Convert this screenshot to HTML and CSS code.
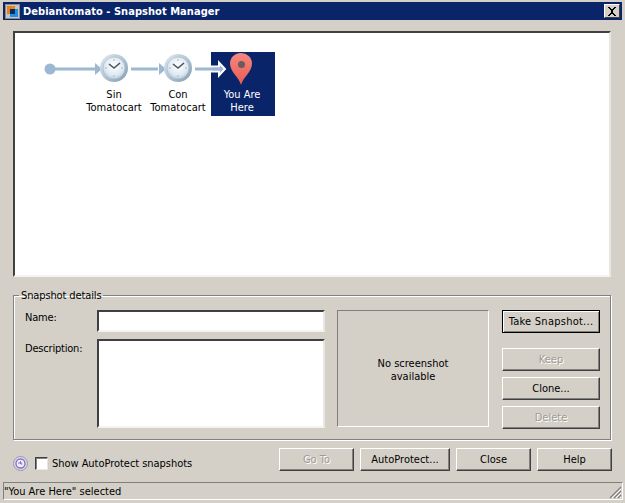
FILE: index.html
```html
<!DOCTYPE html>
<html lang="en">
<head>
<meta charset="utf-8">
<title>Debiantomato - Snapshot Manager</title>
<link rel="stylesheet" href="styles.css">
</head>
<body>
<div class="window">
  <header class="titlebar">
    <svg class="app-icon" width="15" height="15" viewBox="0 0 15 15">
      <rect x="0.5" y="0.5" width="14" height="14" fill="#c9c5bc" stroke="#8a8a8a"/>
      <rect x="2" y="2" width="8" height="8" fill="#e8821e"/>
      <rect x="5" y="5" width="8" height="8" fill="#1f8fe0"/>
      <rect x="5" y="5" width="5" height="5" fill="#0b2a63"/>
    </svg>
    <span class="title-text">Debiantomato - Snapshot Manager</span>
    <button class="close-x" type="button" aria-label="Close">
      <svg width="10" height="9" viewBox="0 0 10 9"><path d="M1 0h2v1h1v1h2V1h1V0h2v1H8v1H7v1H6v3h1v1h1v1h1v1H7V8H6V7H4v1H3v1H1V8h1V7h1V6h1V3H3V2H2V1H1z" fill="#000"/></svg>
    </button>
  </header>

  <main class="content">
    <section class="tree">
      <svg class="tree-art" width="594" height="242" viewBox="0 0 594 242">
        <defs>
          <radialGradient id="face" cx="50%" cy="40%" r="60%">
            <stop offset="0" stop-color="#ffffff"/>
            <stop offset="0.7" stop-color="#dfeaf2"/>
            <stop offset="1" stop-color="#b9d0e0"/>
          </radialGradient>
          <linearGradient id="rim" x1="0" y1="0" x2="1" y2="1">
            <stop offset="0" stop-color="#e6edf2"/>
            <stop offset="1" stop-color="#7f9ab3"/>
          </linearGradient>
          <linearGradient id="pin" x1="0" y1="0" x2="0" y2="1">
            <stop offset="0" stop-color="#f58880"/>
            <stop offset="1" stop-color="#ea5a52"/>
          </linearGradient>
          <g id="clock">
            <circle r="14" fill="url(#rim)"/>
            <circle r="11" fill="url(#face)" stroke="#a9bccb" stroke-width="0.7"/>
            <path d="M0-9v2M0 9V7M-9 0h2M9 0H7" stroke="#a8bac8" stroke-width="1"/>
            <path d="M-5-4L0 0L6-5" fill="none" stroke="#4a5560" stroke-width="1.6"/>
          </g>
        </defs>
        <rect x="196" y="19" width="64" height="64" fill="#0a246a"/>
        <circle cx="35" cy="36" r="5.5" fill="#9db8d2"/>
        <path d="M40 36h42" stroke="#9db8d2" stroke-width="3"/>
        <path d="M80 30l7 6l-7 6z" fill="#9db8d2"/>
        <use href="#clock" x="99" y="35"/>
        <path d="M116 36h27" stroke="#9db8d2" stroke-width="3"/>
        <path d="M144 30l7 6l-7 6z" fill="#9db8d2"/>
        <use href="#clock" x="163" y="35"/>
        <path d="M196 33.5h8v-4l6 6.500l-6 6.500v-4h-8z" fill="#9db8d2" stroke="#ffffff" stroke-width="2"/>
        <path d="M180 36h26" stroke="#9db8d2" stroke-width="3"/>
        <path d="M226 52c-2-8-11-13-11-21.500a11 10.500 0 0 1 22 0c0 8.500-9 13.500-11 21.500z" fill="url(#pin)"/>
        <circle cx="226.500" cy="31.500" r="3.500" fill="#6d5a5a"/>
      </svg>
      <div class="node node-a">Sin<br>Tomatocart</div>
      <div class="node node-b">Con<br>Tomatocart</div>
      <div class="node node-c">You Are<br>Here</div>
    </section>

    <fieldset class="details">
      <legend>Snapshot details</legend>
      <div class="form">
        <div class="labels-inputs">
          <div class="row row-name">
            <label class="field-label">Name:</label>
            <div class="input input-name"></div>
          </div>
          <div class="row">
            <label class="field-label field-label-desc">Description:</label>
            <div class="input input-desc"></div>
          </div>
        </div>
        <div class="preview">No screenshot<br>available</div>
        <div class="side-buttons">
          <button class="btn btn-default" type="button">Take Snapshot...</button>
          <button class="btn btn-side btn-keep" type="button" disabled>Keep</button>
          <button class="btn btn-side" type="button">Clone...</button>
          <button class="btn btn-side" type="button" disabled>Delete</button>
        </div>
      </div>
    </fieldset>

    <div class="actions">
      <div class="autoprotect">
        <svg class="ap-icon" width="15" height="15" viewBox="0 0 15 15">
          <circle cx="7.500" cy="7.500" r="7" fill="#dcd8e6" stroke="#9a96b8"/>
          <circle cx="7.500" cy="7.500" r="4.500" fill="#f2effa" stroke="#8577c4" stroke-width="1.400"/>
          <path d="M5 7h4M7.500 5v3h2" fill="none" stroke="#8577c4"/>
        </svg>
        <span class="checkbox"></span>
        <span class="ap-label">Show AutoProtect snapshots</span>
      </div>
      <div class="action-buttons">
        <button class="btn btn-wide" type="button" disabled>Go To</button>
        <button class="btn btn-auto" type="button">AutoProtect...</button>
        <button class="btn btn-wide" type="button">Close</button>
        <button class="btn btn-wide" type="button">Help</button>
      </div>
    </div>
  </main>

  <footer class="statusbar">
    <span>"You Are Here" selected</span>
    <svg class="grip" width="13" height="13" viewBox="0 0 13 13">
      <path d="M12 1L1 12M12 5L5 12M12 9L9 12" stroke="#808080" stroke-width="1.200"/>
      <path d="M12 3L3 12M12 7L7 12M12 11L11 12" stroke="#ffffff" stroke-width="1"/>
    </svg>
  </footer>
</div>
</body>
</html>
```
FILE: styles.css
```css
* { box-sizing: border-box; }
html, body { margin: 0; height: 100%; }
body {
  background: #d4d0c8;
  font-family: "DejaVu Sans Condensed", "DejaVu Sans", sans-serif;
  font-stretch: condensed;
  font-size: 11px;
  line-height: 13px;
  color: #000;
}
.window {
  width: 625px;
  height: 503px;
  padding: 2px 3px 3px;
  display: flex;
  flex-direction: column;
}
.titlebar {
  height: 18px;
  flex: none;
  background: #0a246a;
  color: #fff;
  font-weight: bold;
  display: flex;
  align-items: center;
  padding: 0 2px;
}
.app-icon { flex: none; margin-right: 3px; }
.title-text { flex: 1; letter-spacing: 0.05px; }
.close-x {
  width: 16px;
  height: 14px;
  padding: 0;
  background: #d4d0c8;
  border: 1px solid;
  border-color: #fff #404040 #404040 #fff;
  display: flex;
  align-items: center;
  justify-content: center;
}
.content {
  flex: 1;
  padding: 11px 10px 0;
  display: flex;
  flex-direction: column;
}
.tree {
  position: relative;
  height: 246px;
  flex: none;
  width: 598px;
  background: #fff;
  border: 2px solid;
  border-color: #404040 #e8e6e0 #f4f3ef #404040;
}
.tree-art { position: absolute; left: 0; top: 0; display: block; }
.node {
  position: absolute;
  top: 55px;
  width: 64px;
  text-align: center;
}
.node-a { left: 67px; }
.node-b { left: 131px; }
.node-c { left: 195px; color: #fff; }

.details {
  margin: 12px 0 0;
  width: 598px;
  height: 151px;
  flex: none;
  padding: 0;
  border: 1px solid #808080;
  box-shadow: 1px 1px 0 #fff, inset 1px 1px 0 #fff;
  position: relative;
}
.details legend {
  margin-left: 5px;
  padding: 0 2px;
  height: 13px;
  letter-spacing: -0.12px;
}
.form {
  display: flex;
  padding: 8px 10px 0 10px;
}
.labels-inputs {
  width: 301px;
  display: flex;
  flex-direction: column;
  gap: 7px;
  flex: none;
}
.row { display: flex; }
.field-label {
  width: 73px;
  flex: none;
  padding: 1px 0 0 1px;
  letter-spacing: -0.2px;
}
.field-label-desc { padding-top: 3px; }
.input {
  width: 228px;
  background: #fff;
  border: 2px solid;
  border-color: #404040 #e8e6e0 #f4f3ef #404040;
}
.input-name { height: 22px; }
.input-desc { height: 89px; }
.preview {
  margin-left: 12px;
  width: 152px;
  height: 117px;
  padding-top: 2px;
  border: 1px solid;
  border-color: #808080 #fff #fff #808080;
  display: flex;
  align-items: center;
  justify-content: center;
  text-align: center;
}
.side-buttons {
  margin-left: 13px;
  width: 98px;
  display: flex;
  flex-direction: column;
}
.btn {
  font: inherit;
  font-stretch: condensed;
  color: #000;
  background: #d4d0c8;
  padding: 0 0 1px;
  height: 23px;
  border: 1px solid;
  border-color: #fff #404040 #404040 #fff;
  box-shadow: inset -1px -1px 0 #808080;
}
.btn:disabled { color: #a09c94; text-shadow: 1px 1px 0 #fff; }
.btn-default {
  border: 1px solid #000;
  box-shadow: inset 1px 1px 0 #fff, inset -1px -1px 0 #808080;
  letter-spacing: 0.25px;
}
.btn-side { margin-top: 6px; }
.btn-keep { margin-top: 15px; }
.actions {
  margin-top: 8px;
  display: flex;
  align-items: flex-start;
  justify-content: space-between;
  width: 599px;
}
.autoprotect {
  display: flex;
  align-items: center;
  padding-top: 8px;
  height: 23px;
}
.ap-icon { flex: none; margin-right: 7px; }
.checkbox {
  width: 13px;
  height: 13px;
  flex: none;
  margin-right: 4px;
  background: #fff;
  border: 1px solid;
  border-color: #404040 #e8e6e0 #e8e6e0 #404040;
  box-shadow: inset 1px 1px 0 #808080;
}
.ap-label { letter-spacing: -0.04px; }
.action-buttons { display: flex; gap: 6px; }
.btn-wide { width: 75px; }
.btn-auto { width: 90px; }
.statusbar {
  height: 18px;
  flex: none;
  margin-top: 1px;
  border: 1px solid;
  border-color: #808080 #fff #fff #808080;
  padding: 2px 0 0 0;
  position: relative;
  margin-right: -1px;
}
.grip { position: absolute; right: 0; bottom: 0; }
```
